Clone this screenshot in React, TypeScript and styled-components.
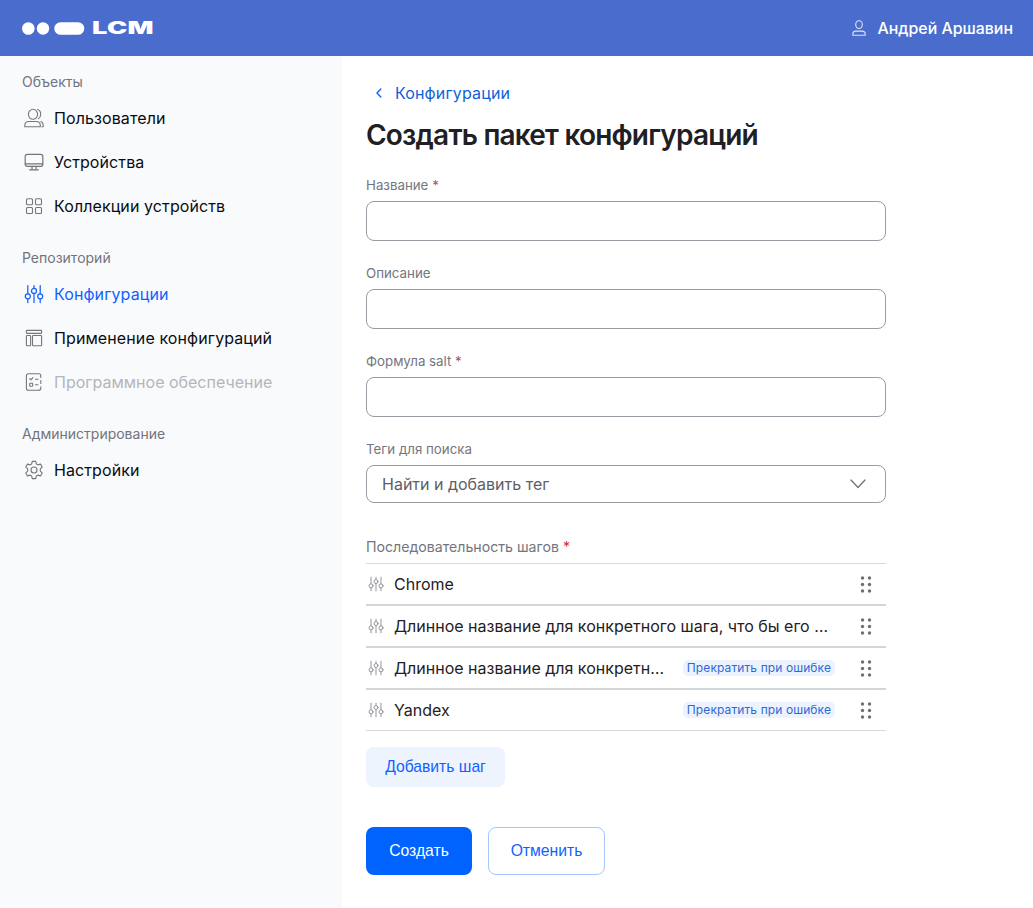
import React from "react";
import styled, { createGlobalStyle } from "styled-components";

const Global = createGlobalStyle`
  html, body { margin: 0; padding: 0; background: #fff; }
  body { font-family: Inter, "Liberation Sans", sans-serif; color: #1f2024; }
  * { box-sizing: border-box; }
`;

const Page = styled.div`
  width: 1033px;
  height: 908px;
  display: flex;
  flex-direction: column;
  overflow: hidden;
`;
const Header = styled.header`
  height: 56px;
  flex: none;
  background: #4a6dcd;
  display: flex;
  align-items: center;
  justify-content: space-between;
  padding: 0 20px 0 22px;
  color: #fff;
`;
const Logo = styled.div`
  display: flex;
  align-items: center;
  gap: 7px;
`;
const LogoMark = styled.svg`
  display: block;
`;
const LogoText = styled.span`
  display: inline-block;
  font-size: 17px;
  line-height: 14px;
  font-weight: 900;
  letter-spacing: 0.2px;
  transform: scaleX(1.6);
  transform-origin: left center;
`;
const User = styled.div`
  display: flex;
  align-items: center;
  gap: 11px;
  font-size: 15.9px;
  font-weight: 500;
`;
const Body = styled.div`
  flex: 1;
  display: flex;
  min-height: 0;
`;
const Sidebar = styled.nav`
  width: 342px;
  flex: none;
  background: #f9fafc;
  padding: 16px 22px 0;
`;
const SectionLabel = styled.div`
  font-size: 14px;
  line-height: 20px;
  height: 20px;
  margin-bottom: 4px;
  color: #72747c;
`;
const Section = styled.div`
  margin-bottom: 20px;
`;
const NavItem = styled.div<{ $state?: "active" | "disabled" }>`
  height: 44px;
  display: flex;
  align-items: center;
  gap: 10px;
  padding-left: 2px;
  font-size: 16px;
  letter-spacing: ${(p) => (p.$state === "disabled" ? 0 : 0.1)}px;
  color: ${(p) =>
    p.$state === "active" ? "#0f62fe" : p.$state === "disabled" ? "#b4b6ba" : "#0b0c10"};
  svg {
    flex: none;
    color: ${(p) => (p.$state === "active" ? "#0f62fe" : "#74767e")};
  }
`;
const Main = styled.main`
  flex: 1;
  padding: 26px 0 0 24px;
`;
const Crumb = styled.a`
  display: flex;
  align-items: center;
  height: 22px;
  gap: 11px;
  padding-left: 8px;
  font-size: 16px;
  letter-spacing: 0.15px;
  color: #0f62d8;
  svg {
    flex: none;
  }
`;
const Title = styled.h1`
  margin: 12px 0 0;
  font-size: 28px;
  line-height: 38px;
  font-weight: 600;
  color: #1f2024;
  letter-spacing: -0.8px;
`;
const Form = styled.div`
  width: 520px;
  margin-top: 21px;
`;
const Field = styled.div<{ $gap?: number }>`
  margin-bottom: ${(p) => p.$gap ?? 22}px;
`;
const Label = styled.div`
  font-size: 13.3px;
  line-height: 20px;
  height: 20px;
  margin-bottom: 6px;
  color: #74767e;
`;
const Req = styled.span<{ $bright?: boolean }>`
  color: ${(p) => (p.$bright ? "#e0232e" : "#a5565e")};
`;
const Input = styled.input`
  display: block;
  width: 100%;
  height: 40px;
  border: 1px solid #9a9ca4;
  border-radius: 8px;
  background: #fff;
  outline: none;
`;
const Select = styled.div`
  height: 38px;
  border: 1px solid #9a9ca4;
  border-radius: 8px;
  display: flex;
  align-items: center;
  justify-content: space-between;
  padding: 0 19px 0 15px;
  font-size: 16px;
  color: #5c5e66;
`;
const StepsLabel = styled(Label)`
  font-size: 14.15px;
`;
const Steps = styled.div`
  border-top: 1px solid #d8d9dd;
`;
const Step = styled.div`
  height: 42px;
  display: flex;
  align-items: center;
  padding: 0 14px 0 2px;
  font-size: 16px;
  color: #1f2024;
  border-bottom: 2px solid #d4d5da;
  &:last-child {
    height: 41px;
    border-bottom: 1px solid #d8d9dd;
  }
`;
const StepIcon = styled.span`
  width: 26px;
  flex: none;
  display: flex;
  color: #85878e;
`;
const StepName = styled.span`
  flex: 1;
  min-width: 0;
  white-space: nowrap;
  overflow: hidden;
  text-overflow: ellipsis;
`;
const Badge = styled.span`
  flex: none;
  margin-left: 14px;
  height: 16px;
  padding: 0 4px;
  border-radius: 5px;
  background: #ecf3fe;
  color: #2d68d8;
  font-size: 12px;
  letter-spacing: 0.1px;
  line-height: 16px;
  white-space: nowrap;
`;
const Grip = styled.span<{ $afterBadge?: boolean }>`
  flex: none;
  margin-left: ${(p) => (p.$afterBadge ? 25 : 26)}px;
  display: flex;
  color: #6d6f77;
`;
const AddButton = styled.button`
  display: block;
  margin-top: 16px;
  width: 139px;
  height: 40px;
  border: 0;
  border-radius: 8px;
  background: #edf4fe;
  color: #0f62fe;
  font: 15.7px "Liberation Sans", Arial, sans-serif;
`;
const Actions = styled.div`
  display: flex;
  gap: 16px;
  margin-top: 40px;
`;
const Primary = styled.button`
  width: 106px;
  height: 48px;
  border: 0;
  border-radius: 8px;
  background: #0062ff;
  color: #fff;
  font: 15.7px "Liberation Sans", Arial, sans-serif;
`;
const Secondary = styled.button`
  width: 117px;
  height: 48px;
  border: 1px solid #a6c6fb;
  border-radius: 8px;
  background: #fff;
  color: #0f62fe;
  font: 15.7px "Liberation Sans", Arial, sans-serif;
`;

type IconProps = { size?: number };
const Svg: React.FC<IconProps & { children: React.ReactNode; weight?: number }> = ({ size = 20, weight = 1.1, children }) => (
  <svg width={size} height={size} viewBox="0 0 20 20" fill="none" stroke="currentColor" strokeWidth={weight} strokeLinecap="round" strokeLinejoin="round">
    {children}
  </svg>
);
const UsersIcon = () => (
  <Svg>
    <ellipse cx="9" cy="6.300" rx="4.600" ry="5" />
    <path d="M.8 18.800v-1.300c0-2.500 1.700-4 4-4h7.500c2.300 0 4 1.500 4 4v1.300Z" />
    <path d="M13.500 1.500c2.200.5 3.200 2.600 3.200 4.800 0 1.800-.8 3.600-2.300 4.400M16.900 13.500c1.500.6 2.300 2 2.300 3.700v1.600h-1.300" />
  </Svg>
);
const MonitorIcon = () => (
  <Svg weight={1.2}>
    <rect x="1.200" y="2.400" width="17.600" height="12" rx="2.200" />
    <path d="M1.200 11.800h17.600M8 14.400v3.200M12 14.400v3.200M5.600 17.800h8.800" />
  </Svg>
);
const GridIcon = () => (
  <Svg>
    <rect x="2.500" y="2.800" width="6" height="6" rx="1" />
    <rect x="11.500" y="2.800" width="6" height="6" rx="1" />
    <rect x="2.500" y="11.500" width="6" height="6" rx="1" />
    <rect x="11.500" y="11.500" width="6" height="6" rx="1" />
  </Svg>
);
const SlidersIcon: React.FC<IconProps & { weight?: number }> = ({ size = 20, weight = 1.250 }) => (
  <Svg size={size} weight={weight}>
    <path d="M3.800 1.500v8M3.800 15v3.500M10 1.500v2.700M10 9.600v8.900M16.200 1.500v8M16.200 15v3.500" />
    <circle cx="3.800" cy="12.300" r="2.500" />
    <circle cx="10" cy="6.900" r="2.500" />
    <circle cx="16.200" cy="12.300" r="2.500" />
  </Svg>
);
const LayoutIcon = () => (
  <Svg>
    <rect x="2.400" y="2.400" width="15.200" height="3" rx=".6" />
    <rect x="2.400" y="7.500" width="4.200" height="10.200" rx=".8" />
    <rect x="8.500" y="7.500" width="9.100" height="10.200" rx=".8" />
  </Svg>
);
const ChecklistIcon = () => (
  <Svg>
    <path d="M16.800 5.500V3.800a2 2 0 0 0-2-2H4.400a2 2 0 0 0-2 2v12.400a2 2 0 0 0 2 2h10.400a2 2 0 0 0 2-2v-1.500M16.800 8.500v3" />
    <path d="m5.700 6.700 1.200 1.200 2-2.300M11.500 7.200h2.500M11.500 12.800h2.500" />
    <rect x="5.700" y="11.300" width="3" height="3" rx=".6" />
  </Svg>
);
const GearIcon = () => (
  <Svg>
    <path d="M8.300 1.400h3.400l.7 2.600 1.500.9 2.600-.8 1.700 3-1.900 1.800v2.200l1.900 1.800-1.700 3-2.600-.8-1.500.9-.7 2.600H8.300l-.7-2.600-1.500-.9-2.600.8-1.700-3 1.900-1.800V8.900L1.800 7.100l1.700-3 2.600.8 1.500-.9Z" />
    <circle cx="10" cy="10" r="3" />
  </Svg>
);
const PersonIcon = () => (
  <svg width="14" height="16" viewBox="0 0 14 16" fill="none" stroke="#dce4f7" strokeWidth={1.100}>
    <ellipse cx="7" cy="4.600" rx="3.300" ry="3.900" />
    <path d="M.8 15.200v-.9c0-2.100 1.400-3.200 3.100-3.200h6.200c1.700 0 3.100 1.100 3.100 3.200v.9Z" strokeLinejoin="round" />
  </svg>
);
const GripIcon = () => (
  <svg width="12" height="17" viewBox="0 0 12 17" fill="currentColor">
    {[2, 8.500, 15].map((y) => (
      <React.Fragment key={y}>
        <circle cx="2.500" cy={y} r="1.700" />
        <circle cx="9.500" cy={y} r="1.700" />
      </React.Fragment>
    ))}
  </svg>
);

const stepsData = [
  { name: "Chrome", badge: false },
  { name: "Длинное название для конкретного шага, что бы его полностью увидеть", badge: false },
  { name: "Длинное название для конкретного шага, что бы его", badge: true },
  { name: "Yandex", badge: true },
];

export default function App() {
  return (
    <Page>
      <Global />
      <Header>
        <Logo>
          <LogoMark width="63" height="13" viewBox="0 0 63 13" fill="#fff">
            <circle cx="6.300" cy="6.500" r="6.300" />
            <circle cx="21" cy="6.500" r="6.200" />
            <rect x="32.300" y="0.200" width="30" height="12.600" rx="6.300" />
          </LogoMark>
          <LogoText>LCM</LogoText>
        </Logo>
        <User>
          <PersonIcon />
          Андрей Аршавин
        </User>
      </Header>
      <Body>
        <Sidebar>
          <Section>
            <SectionLabel>Объекты</SectionLabel>
            <NavItem><UsersIcon />Пользователи</NavItem>
            <NavItem><MonitorIcon />Устройства</NavItem>
            <NavItem><GridIcon />Коллекции устройств</NavItem>
          </Section>
          <Section>
            <SectionLabel>Репозиторий</SectionLabel>
            <NavItem $state="active"><SlidersIcon />Конфигурации</NavItem>
            <NavItem><LayoutIcon />Применение конфигураций</NavItem>
            <NavItem $state="disabled"><ChecklistIcon />Программное обеспечение</NavItem>
          </Section>
          <Section>
            <SectionLabel>Администрирование</SectionLabel>
            <NavItem><GearIcon />Настройки</NavItem>
          </Section>
        </Sidebar>
        <Main>
          <Crumb>
            <svg width="10" height="10" viewBox="0 0 10 10" fill="none" stroke="#0f62fe" strokeWidth={1.400} strokeLinecap="round" strokeLinejoin="round">
              <path d="M6.800 1 3 5l3.800 4" />
            </svg>
            Конфигурации
          </Crumb>
          <Title>Создать пакет конфигураций</Title>
          <Form>
            <Field>
              <Label>Название <Req>*</Req></Label>
              <Input />
            </Field>
            <Field>
              <Label>Описание</Label>
              <Input />
            </Field>
            <Field>
              <Label>Формула salt <Req>*</Req></Label>
              <Input />
            </Field>
            <Field $gap={34}>
              <Label>Теги для поиска</Label>
              <Select>
                Найти и добавить тег
                <svg width="16" height="10" viewBox="0 0 16 10" fill="none" stroke="#6d6f77" strokeWidth={1.200} strokeLinecap="round" strokeLinejoin="round">
                  <path d="m1 1 7 7.500L15 1" />
                </svg>
              </Select>
            </Field>
            <StepsLabel>Последовательность шагов <Req $bright>*</Req></StepsLabel>
            <Steps>
              {stepsData.map((s) => (
                <Step key={s.name}>
                  <StepIcon><SlidersIcon size={16} weight={1.100} /></StepIcon>
                  <StepName>{s.name}</StepName>
                  {s.badge && <Badge>Прекратить при ошибке</Badge>}
                  <Grip $afterBadge={s.badge}><GripIcon /></Grip>
                </Step>
              ))}
            </Steps>
            <AddButton>Добавить шаг</AddButton>
            <Actions>
              <Primary>Создать</Primary>
              <Secondary>Отменить</Secondary>
            </Actions>
          </Form>
        </Main>
      </Body>
    </Page>
  );
}
